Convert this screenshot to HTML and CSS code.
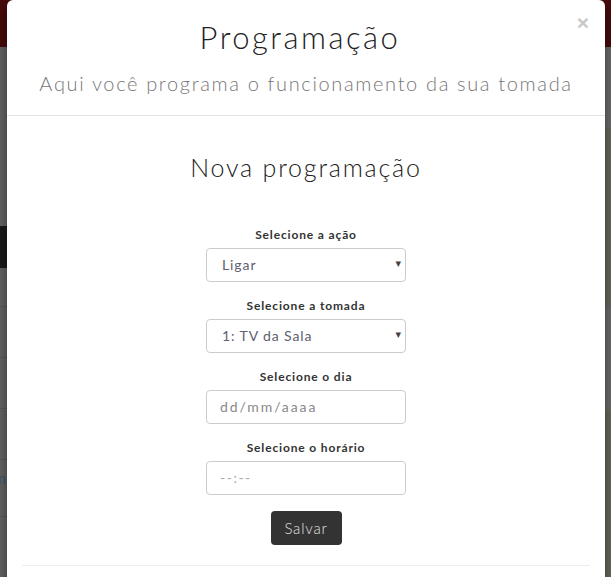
FILE: index.html
```html
<!DOCTYPE html>
<html lang="pt-BR">
<head>
<meta charset="utf-8">
<title>Programação</title>
<link rel="stylesheet" href="styles.css">
</head>
<body>
<div class="page">
  <div class="navbar"></div>
  <div class="page-main">
    <div class="col-left">
      <div class="gap-a"></div>
      <div class="dark-band"></div>
      <div class="row-line r1"></div>
      <div class="row-line r2"></div>
      <div class="row-line r3"></div>
      <div class="row-line r4"></div>
      <div class="row-line r5"><span class="link-cut">n</span></div>
    </div>
    <div class="col-right">
      <div class="gap-b"></div>
      <div class="panel p1">
        <span class="cell c1">2</span>
        <span class="cell c2">1</span>
        <span class="cell c3">1</span>
      </div>
      <div class="gap-c"></div>
      <div class="panel p2">
        <span class="cell c4">2</span>
        <span class="cell c5">9</span>
        <span class="cell c6">6</span>
        <span class="cell c7">3</span>
      </div>
    </div>
  </div>
</div>

<div class="modal">
  <div class="modal-content">
    <div class="modal-header">
      <button class="close" type="button">×</button>
      <h2 class="modal-title">Programação</h2>
      <p class="modal-sub">Aqui você programa o funcionamento da sua tomada</p>
    </div>
    <div class="modal-body">
      <h3 class="section-title">Nova programação</h3>
      <form class="form">
        <div class="form-group">
          <label class="label">Selecione a ação</label>
          <div class="select-wrap">
            <div class="control select">Ligar</div>
            <span class="caret">▾</span>
          </div>
        </div>
        <div class="form-group">
          <label class="label">Selecione a tomada</label>
          <div class="select-wrap">
            <div class="control select">1: TV da Sala</div>
            <span class="caret">▾</span>
          </div>
        </div>
        <div class="form-group">
          <label class="label">Selecione o dia</label>
          <div class="control placeholder">dd/mm/aaaa</div>
        </div>
        <div class="form-group">
          <label class="label">Selecione o horário</label>
          <div class="control placeholder time">--:--</div>
        </div>
        <button class="btn" type="button">Salvar</button>
      </form>
      <hr class="divider">
    </div>
  </div>
</div>
</body>
</html>
```

FILE: styles.css
```css
* { box-sizing: border-box; }
html, body { margin: 0; padding: 0; }
body {
  width: 611px;
  height: 577px;
  overflow: hidden;
  background: #666;
  font-family: "Lato", "Open Sans", sans-serif;
  position: relative;
}

/* dimmed page behind modal */
.page { width: 611px; height: 577px; }
.navbar { height: 47px; background: #4a0b0b; }
.page-main { display: flex; height: 530px; }
.col-left { width: 300px; background: #666; display: flex; flex-direction: column; }
.col-left > div { flex-shrink: 0; }
.gap-a { height: 179px; }
.dark-band { height: 42px; background: #1b1b1b; }
.row-line { height: 51px; border-bottom: 1px solid #5a5a5a; position: relative; }
.r1 { height: 39px; }
.r5 { height: 57px; }
.link-cut { position: absolute; left: -2px; top: 11px; font-size: 14px; color: #3a5a7a; font-family: "Liberation Sans", sans-serif; }

.col-right { flex: 1; background: #6a6a6a; display: flex; flex-direction: column; }
.gap-b { height: 80px; background: #6e6e6e; flex-shrink: 0; }
.panel { background: #6b6a5e; position: relative; flex-shrink: 0; }
.p1 { height: 180px; }
.gap-c { height: 103px; background: #6e6e6e; flex-shrink: 0; }
.p2 { flex: 1; }
.cell { position: absolute; left: 294px; font-size: 13px; color: #2a2a35; font-family: "Liberation Sans", sans-serif; }
.c1 { top: 43px; } .c2 { top: 74px; } .c3 { top: 106px; }
.c4 { top: 66px; } .c5 { top: 93px; } .c6 { top: 121px; } .c7 { top: 148px; }

/* modal overlay */
.modal { position: absolute; left: 7px; top: 0; width: 598px; }
.modal-content {
  background: #fff;
  border-radius: 6px;
  box-shadow: 0 5px 15px rgba(0, 0, 0, 0.5);
  height: 600px;
}
.modal-header {
  position: relative;
  height: 116px;
  border-bottom: 1px solid #e5e5e5;
  text-align: center;
  padding-top: 17px;
}
.close {
  position: absolute;
  right: 16px;
  top: 12px;
  border: 0;
  background: none;
  padding: 0;
  font-size: 21px;
  font-weight: 700;
  line-height: 1;
  color: #c8c8c8;
  font-family: "Liberation Sans", sans-serif;
}
.modal-title {
  margin: 0;
  padding-right: 12px;
  font-size: 31px;
  font-weight: 300;
  line-height: 40px;
  color: #222;
  letter-spacing: 2.5px;
}
.modal-sub {
  margin: 14px 0 0;
  font-size: 20px;
  font-weight: 300;
  line-height: 24px;
  color: #777;
  letter-spacing: 1.65px;
}

.modal-body { padding: 15px; text-align: center; }
.section-title {
  margin: 20px 0 0;
  height: 75px;
  font-size: 25px;
  font-weight: 300;
  line-height: 32px;
  color: #222;
  letter-spacing: 1.8px;
}
.form { display: flex; flex-direction: column; align-items: center; }
.form-group { display: flex; flex-direction: column; align-items: center; margin-bottom: 15px; }
.label {
  display: block;
  font-size: 12px;
  font-weight: 700;
  line-height: 17px;
  margin-bottom: 5px;
  color: #333;
  letter-spacing: 0.85px;
}
.select-wrap { position: relative; }
.control {
  width: 200px;
  height: 34px;
  border: 1px solid #ccc;
  border-radius: 4px;
  padding: 0 15px;
  text-align: left;
  font-size: 14px;
  line-height: 32px;
  color: #606070;
  letter-spacing: 0.9px;
}
.placeholder { color: #888; padding-left: 13px; letter-spacing: 1.9px; }
.time { letter-spacing: 1.5px; color: #aaa; }
.caret {
  position: absolute;
  right: 5px;
  top: 9px;
  font-size: 11px;
  color: #444;
  font-family: "DejaVu Sans", sans-serif;
}
.btn {
  margin-top: 1px;
  width: 71px;
  height: 34px;
  border: 0;
  border-radius: 4px;
  background: #333;
  color: #e0e0e0;
  font-family: "Lato", sans-serif;
  font-size: 15px;
  font-weight: 300;
  letter-spacing: 0.8px;
}
.divider {
  margin: 20px 0 0;
  border: 0;
  border-top: 1px solid #eee;
}
```
